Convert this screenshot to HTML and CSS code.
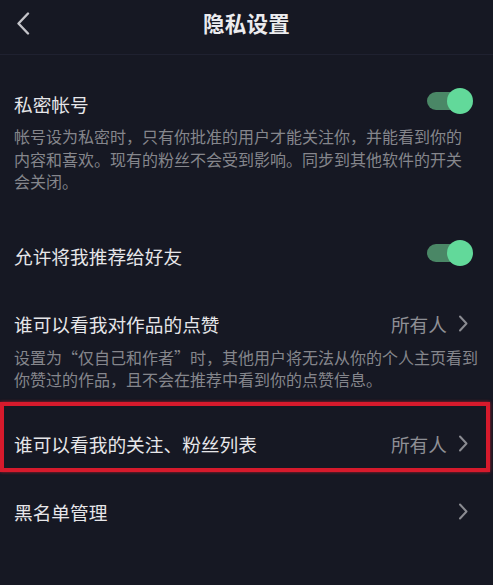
FILE: index.html
```html
<!DOCTYPE html>
<html lang="zh-CN">
<head>
<meta charset="utf-8">
<title>隐私设置</title>
<link rel="stylesheet" href="styles.css">
</head>
<body>
<header class="header">
  <span class="back">
    <svg width="14" height="23" viewBox="0 0 14 23"><path d="M12 1.5 L2.5 11.5 L12 21.5" fill="none" stroke="#c4c4c9" stroke-width="2.4" stroke-linecap="round" stroke-linejoin="round"/></svg>
  </span>
  <h1 class="title">隐私设置</h1>
  <span></span>
</header>

<section class="item item-private">
  <div class="row">
    <span class="label">私密帐号</span>
    <span class="toggle"><span class="track"></span><span class="knob"></span></span>
  </div>
  <p class="desc">帐号设为私密时，只有你批准的用户才能关注你，并能看到你的内容和喜欢。现有的粉丝不会受到影响。同步到其他软件的开关会关闭。</p>
</section>

<section class="item item-recommend">
  <div class="row">
    <span class="label">允许将我推荐给好友</span>
    <span class="toggle"><span class="track"></span><span class="knob"></span></span>
  </div>
</section>

<section class="item item-likes">
  <div class="row">
    <span class="label">谁可以看我对作品的点赞</span>
    <span class="value">所有人<svg class="chev" width="10" height="17" viewBox="0 0 10 17"><path d="M2 1.5 L8.5 8.5 L2 15.5" fill="none" stroke="#8a8b91" stroke-width="2" stroke-linecap="round" stroke-linejoin="round"/></svg></span>
  </div>
  <p class="desc">设置为“仅自己和作者”时，其他用户将无法从你的个人主页看到你赞过的作品，且不会在推荐中看到你的点赞信息。</p>
</section>

<section class="item item-follow">
  <div class="row">
    <span class="label">谁可以看我的关注、粉丝列表</span>
    <span class="value">所有人<svg class="chev" width="10" height="17" viewBox="0 0 10 17"><path d="M2 1.5 L8.5 8.5 L2 15.5" fill="none" stroke="#8a8b91" stroke-width="2" stroke-linecap="round" stroke-linejoin="round"/></svg></span>
  </div>
</section>

<section class="item item-block">
  <div class="row">
    <span class="label">黑名单管理</span>
    <span class="value"><svg class="chev" width="10" height="17" viewBox="0 0 10 17"><path d="M2 1.5 L8.5 8.5 L2 15.5" fill="none" stroke="#8a8b91" stroke-width="2" stroke-linecap="round" stroke-linejoin="round"/></svg></span>
  </div>
</section>
</body>
</html>
```

FILE: styles.css
```css
html, body {
  margin: 0;
  padding: 0;
  background: #161823;
  height: 100%;
}
body {
  font-family: "Noto Sans CJK SC", "Noto Sans", sans-serif;
  color: #e6e6e9;
  overflow: hidden;
}
.header {
  display: grid;
  grid-template-columns: 1fr auto 1fr;
  align-items: center;
  height: 55px;
  box-sizing: border-box;
  padding-bottom: 9px;
  border-bottom: 1px solid #1f2130;
}
.back {
  display: flex;
  margin-left: 16px;
  padding-top: 1px;
}
.title {
  margin: 0;
  font-size: 21.5px;
  font-weight: 700;
  line-height: 30px;
  color: #ebebee;
  letter-spacing: 0.3px;
}
.item {
  padding: 0;
}
.row {
  display: flex;
  align-items: center;
  justify-content: space-between;
  padding: 0 20px 0 14px;
  height: 26px;
}
.label {
  font-size: 18.7px;
  line-height: 26px;
  color: #e6e6e9;
}
.desc {
  margin: 8px 0 0;
  padding: 0 28px 0 14px;
  font-size: 16px;
  line-height: 22.5px;
  color: #85868c;
}
.toggle {
  position: relative;
  display: block;
  width: 46px;
  height: 26px;
  margin-bottom: 6px;
}
.track {
  position: absolute;
  left: 0;
  top: 4px;
  width: 40px;
  height: 18px;
  border-radius: 9px;
  background: #4a8766;
}
.knob {
  position: absolute;
  right: 0;
  top: 0;
  width: 26px;
  height: 26px;
  border-radius: 50%;
  background: #62d99a;
}
.value {
  display: flex;
  align-items: center;
  gap: 11px;
  margin-right: 5px;
  font-size: 18.7px;
  line-height: 26px;
  color: #8e8f95;
}
.chev {
  display: block;
}
.item-private {
  padding-top: 36px;
}
.item-recommend {
  padding-top: 50px;
}
.item-likes {
  padding-top: 42px;
}
.item-likes .desc {
  margin-top: 9px;
  padding-right: 8px;
}
.item-follow {
  margin: 11px 3px 0 0;
  border: 4px solid #d61a2c;
  box-shadow: 0 0 3px rgba(235, 30, 50, 0.7);
  padding: 25px 0 11px 0;
}
.item-follow .row {
  padding: 0 13px 0 10px;
}
.item-block {
  padding-top: 27px;
}
```
